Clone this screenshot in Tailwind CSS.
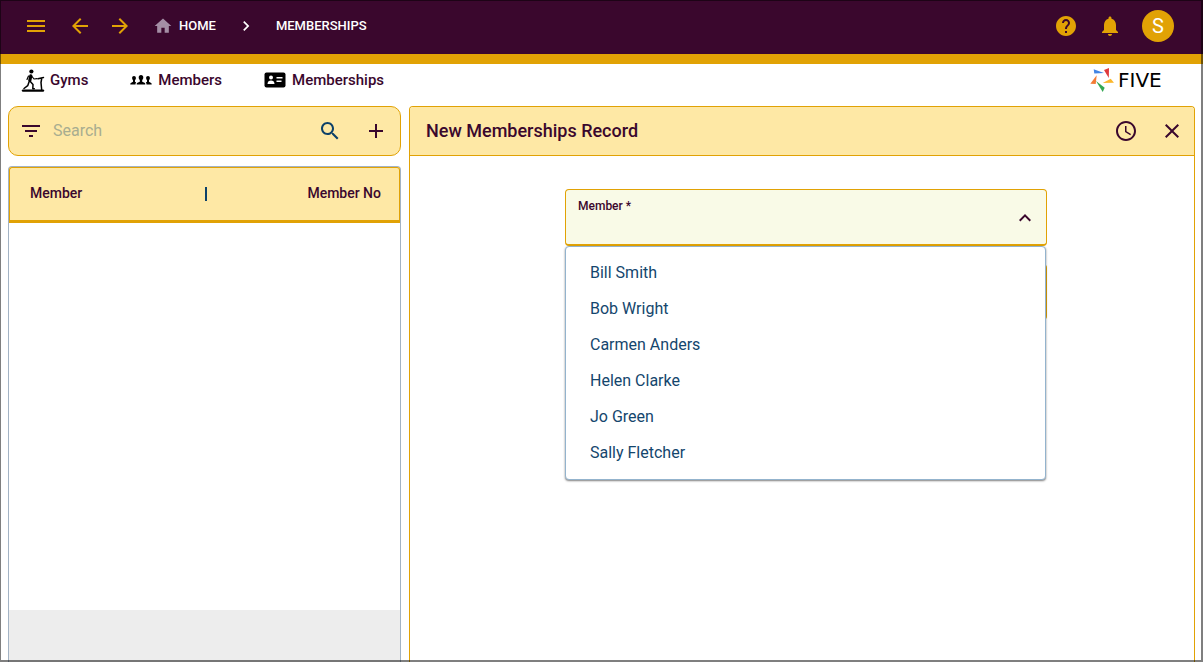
<!DOCTYPE html>
<html lang="en">
<head>
<meta charset="utf-8">
<title>Memberships</title>
<script src="https://cdn.jsdelivr.net/npm/@tailwindcss/browser@4"></script>
</head>
<body class="bg-white font-['Roboto',sans-serif] text-[#3a072d]">
<div class="relative flex h-screen flex-col overflow-hidden">
  <header class="flex h-16 shrink-0 items-center border-b-10 border-[#e1a205] bg-[#3a072d] pr-[29px] pb-0.5 pl-6 text-[#e1a205]">
    <div class="flex items-center gap-4">
      <button aria-label="Menu" class="mr-1"><svg class="size-6" viewBox="0 0 24 24" fill="currentColor"><path d="M3 18h18v-2H3v2zm0-5h18v-2H3v2zm0-7v2h18V6H3z"/></svg></button>
      <button aria-label="Back"><svg class="size-6" viewBox="0 0 24 24" fill="currentColor"><path d="M20 11H7.830l5.590-5.590L12 4l-8 8 8 8 1.410-1.410L7.830 13H20v-2z"/></svg></button>
      <button aria-label="Forward"><svg class="size-6" viewBox="0 0 24 24" fill="currentColor"><path d="m12 4-1.410 1.410L16.170 11H4v2h12.170l-5.580 5.590L12 20l8-8z"/></svg></button>
    </div>
    <nav aria-label="Breadcrumb" class="ml-[21px] flex items-center text-[13px] font-medium text-white">
      <a href="#" class="flex items-center gap-1.5"><svg class="size-5 text-[#a48ea5]" viewBox="0 0 24 24" fill="currentColor"><path d="M10 20v-6h4v6h5v-8h3L12 3 2 12h3v8z"/></svg>HOME</a>
      <svg class="mx-5 size-5" viewBox="0 0 24 24" fill="currentColor"><path d="M10 6 8.590 7.410 13.170 12l-4.580 4.590L10 18l6-6z"/></svg>
      <a href="#">MEMBERSHIPS</a>
    </nav>
    <div class="ml-auto flex items-center">
      <button aria-label="Help" class="mr-5"><svg class="size-6" viewBox="0 0 24 24" fill="currentColor"><path d="M12 2C6.480 2 2 6.480 2 12s4.480 10 10 10 10-4.480 10-10S17.520 2 12 2zm1 17h-2v-2h2v2zm2.070-7.750-.9.920C13.450 12.900 13 13.500 13 15h-2v-.5c0-1.100.45-2.100 1.170-2.830l1.240-1.260c.37-.36.59-.86.59-1.410 0-1.100-.9-2-2-2s-2 .9-2 2H8c0-2.210 1.790-4 4-4s4 1.790 4 4c0 .88-.36 1.680-.93 2.250z"/></svg></button>
      <button aria-label="Notifications" class="mr-5"><svg class="size-6" viewBox="0 0 24 24" fill="currentColor"><path d="M12 22c1.100 0 2-.9 2-2h-4c0 1.100.89 2 2 2zm6-6v-5c0-3.070-1.640-5.640-4.500-6.320V4c0-.83-.67-1.500-1.500-1.500s-1.500.67-1.500 1.500v.68C7.630 5.360 6 7.920 6 11v5l-2 2v1h16v-1l-2-2z"/></svg></button>
      <button class="flex size-8 items-center justify-center rounded-full bg-[#e1a205] text-xl text-white">S</button>
    </div>
  </header>

  <nav aria-label="Main" class="flex h-[42px] shrink-0 items-center px-5 pb-2.5 text-[15px] font-medium">
    <a href="#" class="mr-[42px] flex items-center gap-1"><svg class="size-[26px]" viewBox="0 0 26 26" fill="none" stroke="#000" stroke-linecap="round" stroke-linejoin="round"><circle cx="11.400" cy="4.500" r="2.100" fill="#000" stroke="none"/><path d="M10.800 8.800 9.800 13.500" stroke-width="3.200"/><path d="M8.500 9 7 12.500M12 9.500l2 2.500 3-.3" stroke-width="1.200"/><path d="M10.300 14.500l2.700 3-.2 4.300h1.500M9 15l-1.300 3.700L4 21.500" stroke-width="1.500"/><path d="M18 11.700 23.500 10.500M21.700 11.500l-.7 4 .7 7.500" stroke-width="1.500"/><path d="M3 23.600h20" stroke-width="2.400"/></svg>Gyms</a>
    <a href="#" class="mr-[42px] flex items-center gap-1.5"><svg class="h-3 w-[22px]" viewBox="0 0 22 12" fill="#000"><path d="M11 1c1.500 0 2.300 1 2.300 2.500 0 1.200-.5 2-1.100 2.600v1.700l2.300 1c.6.300.8.700.8 1.700H6.700c0-1 .2-1.400.8-1.700l2.300-1V6.100C9.200 5.500 8.700 4.700 8.700 3.500 8.700 2 9.500 1 11 1z"/><path d="M4 2c1.200 0 1.900.8 1.900 2.100 0 1-.4 1.600-.9 2.100v1.600l1.200.6c-.5.500-.7 1-.7 2.100H.3c0-.9.100-1.300.6-1.500L3 7.800V6.200c-.5-.5-.9-1.100-.9-2.100C2.100 2.800 2.800 2 4 2zM18 2c-1.200 0-1.900.8-1.900 2.100 0 1 .4 1.600.9 2.100v1.600l-1.200.6c.5.500.7 1 .7 2.100h5.200c0-.9-.1-1.300-.6-1.500L19 7.800V6.200c.5-.5.9-1.100.9-2.100C19.900 2.800 19.200 2 18 2z"/></svg>Members</a>
    <a href="#" class="flex items-center gap-1.5"><svg class="h-4 w-[22px]" viewBox="0 0 22 16"><rect x=".5" y=".5" width="21" height="15" rx="2" fill="#000"/><g fill="#fff"><circle cx="7" cy="5.500" r="2"/><path d="M3.500 12c0-2.500 1.500-3.500 3.500-3.500s3.500 1 3.500 3.500zM12.500 5h6v1.500h-6zM12.500 8.500h5V10h-5z"/></g></svg>Memberships</a>
    <div class="ml-auto flex items-center gap-1" aria-label="Five"><svg class="size-6" viewBox="0 0 24 24"><path d="M3.700 1.300 14 5 4.300 5.500z" fill="#4285e4"/><path d="M14 2 19 0l-.2 10z" fill="#e03a3c"/><path d="M12.700 15l8-4.300 3.300 4z" fill="#fbb72c"/><path d="M6 13l8.700 6.700-2 4.300z" fill="#34a853"/><path d="M6.700 7.300 5.700 16 .3 15.700z" fill="#f37b35"/></svg><span class="w-[65px] font-['DejaVu_Sans',sans-serif] text-xl leading-none font-normal text-black">FIVE</span></div>
  </nav>

  <main class="grid min-h-0 flex-1 grid-cols-[1fr_2fr] gap-2 px-2">
    <section class="flex min-h-0 flex-col gap-2.5">
      <div class="flex h-[50px] shrink-0 items-center rounded-[10px] border border-[#e1a205] bg-[#fee8a5] pr-3 pl-2.5">
        <button aria-label="Filter"><svg class="size-6" viewBox="0 0 24 24" fill="currentColor"><path d="M10 18h4v-2h-4v2zM3 6v2h18V6H3zm3 7h12v-2H6v2z"/></svg></button>
        <input aria-label="Search" placeholder="Search" class="ml-2.5 min-w-0 flex-1 bg-transparent text-base placeholder-[#a8ad90] outline-none">
        <button aria-label="Search" class="mr-[22px] text-[#0d4169]"><svg class="size-6" viewBox="0 0 24 24" fill="currentColor"><path d="M15.500 14h-.79l-.28-.27C15.410 12.590 16 11.110 16 9.500 16 5.910 13.090 3 9.500 3S3 5.910 3 9.500 5.910 16 9.500 16c1.610 0 3.090-.59 4.230-1.570l.27.28v.79l5 4.990L20.490 19l-4.990-5zm-6 0C7.010 14 5 11.990 5 9.500S7.010 5 9.500 5 14 7.010 14 9.500 11.990 14 9.500 14z"/></svg></button>
        <button aria-label="Add"><svg class="size-6" viewBox="0 0 24 24" fill="currentColor"><path d="M19 13h-6v6h-2v-6H5v-2h6V5h2v6h6v2z"/></svg></button>
      </div>
      <div class="flex min-h-0 flex-1 flex-col rounded-t border border-b-0 border-[#a3b3c4]">
        <table class="w-full table-fixed border-separate border-spacing-0 text-sm">
          <thead><tr class="h-14 bg-[#fee8a5]">
            <th class="relative w-[198px] rounded-tl-[3px] border border-r-0 border-b-3 border-[#e1a205] pb-0.5 pl-5 text-left font-medium">Member<span class="absolute top-1/2 right-0 h-3.5 w-0.5 -translate-y-1/2 bg-[#0d4169]"></span></th>
            <th class="rounded-tr-[3px] border border-b-3 border-l-0 border-[#e1a205] pr-[18px] pb-0.5 text-right font-medium">Member No</th>
          </tr></thead>
        </table>
        <div class="flex-1"></div>
        <div class="h-[52px] shrink-0 bg-[#ededed]"></div>
      </div>
    </section>

    <section class="flex min-h-0 flex-col rounded-t border border-b-0 border-[#e1a205]">
      <div class="flex h-[49px] shrink-0 items-center rounded-t-[3px] border-b border-[#e1a205] bg-[#fee8a5] pr-2.5 pl-4">
        <h1 class="text-lg font-medium">New Memberships Record</h1>
        <button aria-label="History" class="mr-[22px] ml-auto"><svg class="size-6" viewBox="0 0 24 24" fill="currentColor"><path d="M11.990 2C6.470 2 2 6.480 2 12s4.470 10 9.990 10C17.520 22 22 17.520 22 12S17.520 2 11.990 2zM12 20c-4.420 0-8-3.580-8-8s3.580-8 8-8 8 3.580 8 8-3.580 8-8 8zm.5-13H11v6l5.250 3.150.75-1.230-4.500-2.670z"/></svg></button>
        <button aria-label="Close"><svg class="size-6" viewBox="0 0 24 24" fill="currentColor"><path d="M19 6.410 17.590 5 12 10.590 6.410 5 5 6.410 10.590 12 5 17.590 6.410 19 12 13.410 17.590 19 19 17.590 13.410 12z"/></svg></button>
      </div>
      <form class="flex justify-center pt-[33px] pl-2">
        <div class="relative flex w-full max-w-[482px] flex-col gap-[18px]">
          <div class="relative h-[57px] rounded border border-b-2 border-[#e1a205] bg-[#f9fae7]">
            <label for="member" class="absolute top-2 left-3 text-xs font-medium">Member *</label>
            <select id="member" class="h-full w-full appearance-none bg-transparent px-3 pt-5 text-base outline-none">
              <option value=""></option><option>Bill Smith</option><option>Bob Wright</option><option>Carmen Anders</option><option>Helen Clarke</option><option>Jo Green</option><option>Sally Fletcher</option>
            </select>
            <svg class="pointer-events-none absolute top-4 right-[9px] size-6" viewBox="0 0 24 24" fill="currentColor"><path d="m12 8-6 6 1.410 1.410L12 10.830l4.590 4.580L18 14z"/></svg>
          </div>
          <div class="h-14 rounded border border-b-2 border-[#e1a205] bg-[#f9fae7]"></div>
          <ul role="listbox" aria-label="Member" class="absolute top-[57px] right-px left-0 rounded border border-[#93b3cd] bg-white py-2 text-base text-[#14466d] shadow-[0_1px_2px_rgba(0,0,0,0.5)]">
            <li role="option" class="flex h-9 items-center px-6">Bill Smith</li>
            <li role="option" class="flex h-9 items-center px-6">Bob Wright</li>
            <li role="option" class="flex h-9 items-center px-6">Carmen Anders</li>
            <li role="option" class="flex h-9 items-center px-6">Helen Clarke</li>
            <li role="option" class="flex h-9 items-center px-6">Jo Green</li>
            <li role="option" class="flex h-9 items-center px-6">Sally Fletcher</li>
          </ul>
        </div>
      </form>
    </section>
  </main>
  <div class="pointer-events-none absolute inset-0 border border-r-2 border-b-2 border-black/50"></div>
</div>
</body>
</html>
